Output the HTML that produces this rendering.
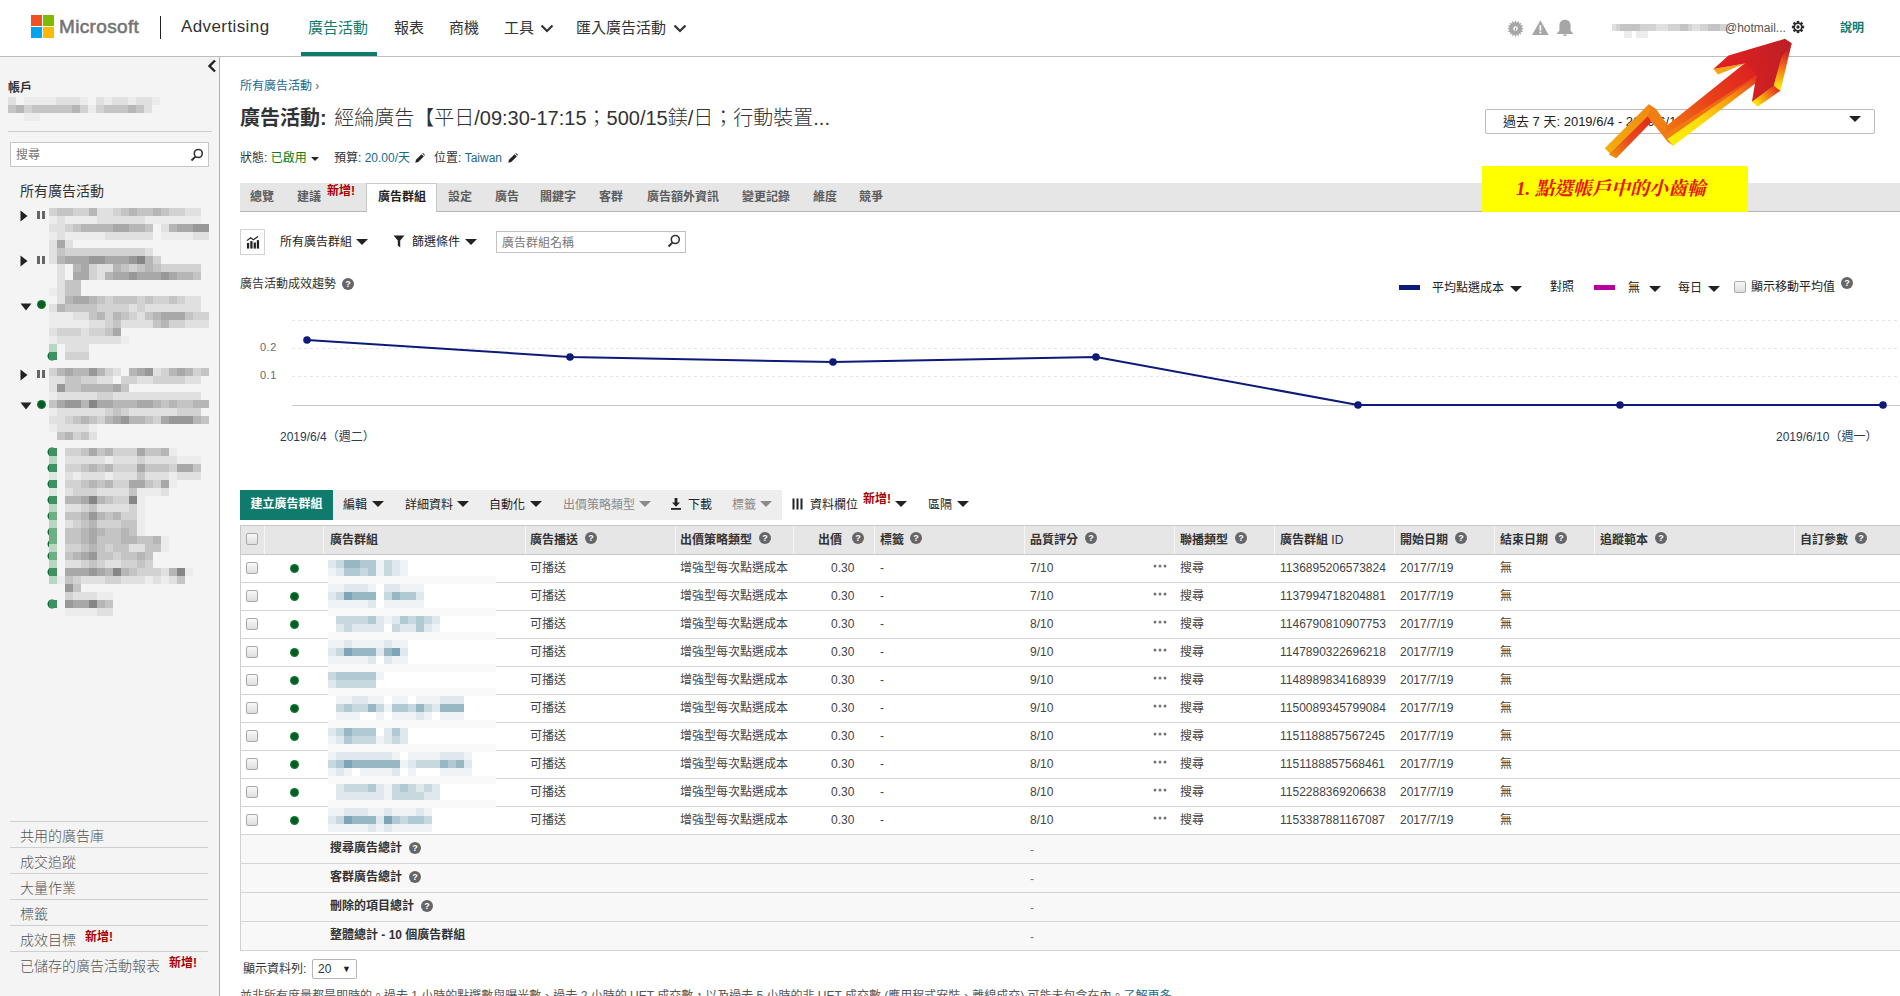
<!DOCTYPE html>
<html lang="zh-Hant"><head><meta charset="utf-8"><title>Microsoft Advertising</title>
<style>
*{box-sizing:border-box;margin:0;padding:0}
html,body{width:1900px;height:996px;overflow:hidden;background:#fff}
body{font-family:"Liberation Sans","Noto Sans CJK TC",sans-serif;font-size:12px;color:#333;position:relative}
.a{position:absolute;white-space:nowrap}
.b{font-weight:bold}
#hdr{position:absolute;left:0;top:0;width:1900px;height:57px;background:#fff;border-bottom:1px solid #bdbdbd}
#side{position:absolute;left:0;top:57px;width:220px;height:939px;background:#f4f4f4;border-right:1px solid #adadad}
.nav{font-size:15px;color:#333;top:17px;line-height:22px}
.teal{color:#0f7b6c}
.lnk{color:#1a6a8e}
.red{color:#a80000;font-weight:bold}
.tri{position:absolute;width:0;height:0;border-left:5px solid transparent;border-right:5px solid transparent;border-top:6px solid #222}
.sline{position:absolute;left:8px;width:204px;height:1px;background:#cfcfcf}
.sl{font-size:14px;color:#555;left:20px;line-height:18px;font-weight:300}
.q{position:absolute;width:12px;height:12px;border-radius:50%;background:#666;color:#fff;font-size:9px;font-weight:bold;line-height:12px;text-align:center;font-family:"Liberation Sans",sans-serif}
.tab{top:189px;font-weight:bold;color:#5c5c5c;line-height:16px}
.th{font-weight:bold;color:#333;top:532px;line-height:16px}
.td{line-height:16px;color:#444}
.row{position:absolute;left:240px;width:1660px;height:1px;background:#d4d4d4}
.cb{position:absolute;left:246px;width:12px;height:12px;border:1px solid #a9a9a9;border-radius:2px;background:linear-gradient(#f8f8f8,#dedede)}
.dot{position:absolute;width:9px;height:9px;border-radius:50%;background:radial-gradient(#075a22 40%,#17803a 70%)}
.mz{position:absolute}
</style></head>
<body>
<div id="hdr">
<div class="a" style="left:31px;top:15px;width:11px;height:11px;background:#f25022"></div>
<div class="a" style="left:43px;top:15px;width:11px;height:11px;background:#7fba00"></div>
<div class="a" style="left:31px;top:27px;width:11px;height:11px;background:#00a4ef"></div>
<div class="a" style="left:43px;top:27px;width:11px;height:11px;background:#ffb900"></div>
<div class="a" id="ms" style="left:59px;top:15px;font-size:19px;line-height:24px;color:#737373;font-weight:normal;-webkit-text-stroke:0.55px #737373;letter-spacing:0.35px;font-family:'Liberation Sans',sans-serif">Microsoft</div>
<div class="a" style="left:160px;top:16px;width:1px;height:23px;background:#222"></div>
<div class="a" id="adv" style="left:181px;top:15px;font-size:17px;line-height:24px;color:#333;letter-spacing:0.4px;font-family:'Liberation Sans',sans-serif">Advertising</div>
<div class="a nav teal" style="left:308px">廣告活動</div>
<div class="a" style="left:301px;top:52px;width:76px;height:4px;background:#0f7b6c"></div>
<div class="a nav" style="left:394px">報表</div>
<div class="a nav" style="left:449px">商機</div>
<div class="a nav" style="left:504px">工具</div>
<svg class="a" style="left:539.5px;top:24px" width="14" height="9" viewBox="0 0 14 9"><polyline points="1.5,1.5 7,7 12.5,1.5" fill="none" stroke="#333" stroke-width="2.2"/></svg>
<div class="a nav" style="left:576px">匯入廣告活動</div>
<svg class="a" style="left:672.5px;top:24px" width="14" height="9" viewBox="0 0 14 9"><polyline points="1.5,1.5 7,7 12.5,1.5" fill="none" stroke="#333" stroke-width="2.2"/></svg>
<svg class="a" style="left:1506px;top:19px" width="70" height="18" viewBox="0 0 70 18">
<g fill="#a6a6a6">
<polygon points="9.5,1.2 10.7,3.7 12.7,1.8 12.8,4.6 15.4,3.7 14.5,6.3 17.3,6.4 15.4,8.4 17.9,9.6 15.4,10.8 17.3,12.8 14.5,12.9 15.4,15.5 12.8,14.6 12.7,17.4 10.7,15.5 9.5,18.0 8.3,15.5 6.3,17.4 6.2,14.6 3.6,15.5 4.5,12.9 1.7,12.8 3.6,10.8 1.1,9.6 3.6,8.4 1.7,6.4 4.5,6.3 3.6,3.7 6.2,4.6 6.3,1.8 8.3,3.7"/>
<path d="M34.4 1.2 L42.7 16 L26.1 16 Z"/>
<path d="M59 0.8c-3.4 0-5.6 2.4-5.6 5.6v5.4l-2.4 2.4v0.8h16v-0.8l-2.4-2.4V6.4c0-3.200000000000001-2.2-5.6-5.6-5.6z"/>
<path d="M57 15.6h4a2 1.6 0 0 1-4 0z"/>
</g>
<circle cx="9.5" cy="9.6" r="2.3" fill="#fff"/><rect x="8.9" y="8.6" width="1.4" height="3" fill="#a6a6a6"/>
<rect x="33.5" y="6.2" width="1.8" height="5.4" fill="#fff"/><rect x="33.5" y="12.6" width="1.8" height="1.8" fill="#fff"/>
</svg>
<svg class="a" style="left:0;top:0" width="1900" height="56"><path fill="#e0e0e0" d="M1612 24h4v7h-4zM1656 24h4v7h-4zM1660 24h4v7h-4zM1664 24h4v7h-4zM1692 24h4v7h-4zM1696 24h4v7h-4z"/><path fill="#d2d2d2" d="M1616 24h4v7h-4zM1640 24h4v7h-4zM1644 24h4v7h-4zM1648 24h4v7h-4zM1652 24h4v7h-4zM1668 24h4v7h-4zM1672 24h4v7h-4zM1676 24h4v7h-4zM1688 24h4v7h-4zM1700 24h4v7h-4zM1704 24h4v7h-4zM1720 24h4v7h-4zM1724 24h4v7h-4z"/><path fill="#c4c4c4" d="M1620 24h4v7h-4zM1624 24h4v7h-4zM1628 24h4v7h-4zM1632 24h4v7h-4zM1636 24h4v7h-4zM1680 24h4v7h-4zM1684 24h4v7h-4zM1708 24h4v7h-4zM1712 24h4v7h-4zM1716 24h4v7h-4z"/><path fill="#ececec" d="M1624 31h4v7h-4zM1628 31h4v7h-4zM1636 31h4v7h-4zM1640 31h4v7h-4zM1644 31h4v7h-4z"/></svg>
<div class="a" style="left:1725px;top:20px;line-height:16px;color:#555;font-size:12px">@hotmail...</div>
<svg class="a" style="left:1791px;top:20px" width="14" height="14" viewBox="-8 -8 16 16">
<g fill="#2b2b2b"><circle r="5.2"/>
<g id="tt"><rect x="-1.5" y="-7" width="3" height="14"/></g>
<rect x="-1.5" y="-7" width="3" height="14" transform="rotate(45)"/>
<rect x="-1.5" y="-7" width="3" height="14" transform="rotate(90)"/>
<rect x="-1.5" y="-7" width="3" height="14" transform="rotate(135)"/></g>
<circle r="3.4" fill="#fff"/><circle r="1.9" fill="#2b2b2b"/><circle r="0.0" fill="#fff"/>
</svg>
<div class="a b teal" style="left:1840px;top:20px;line-height:16px">說明</div>
</div>
<div id="side"></div>
<svg class="a" style="left:206px;top:59px" width="12" height="14" viewBox="0 0 12 14"><polyline points="9,1.5 3.5,7 9,12.5" fill="none" stroke="#222" stroke-width="2.4"/></svg>
<div class="a b" style="left:8px;top:80px;line-height:16px;color:#333">帳戶</div>
<svg class="a" style="left:0;top:0" width="220" height="996"><path fill="#e0e0e0" d="M8 97h8v8h-8zM56 97h8v8h-8zM64 97h8v8h-8zM72 97h8v8h-8zM96 97h8v8h-8zM112 97h8v8h-8zM120 97h8v8h-8zM136 97h8v8h-8zM144 97h8v8h-8zM144 105h8v8h-8z"/><path fill="#ececec" d="M24 97h8v8h-8zM32 97h8v8h-8zM40 97h8v8h-8zM48 97h8v8h-8zM80 97h8v8h-8zM104 97h8v8h-8zM128 97h8v8h-8zM152 97h8v8h-8zM88 105h8v8h-8zM24 113h8v8h-8zM32 113h8v8h-8z"/><path fill="#c4c4c4" d="M8 105h8v8h-8zM32 105h8v8h-8zM40 105h8v8h-8zM48 105h8v8h-8zM56 105h8v8h-8zM64 105h8v8h-8zM104 105h8v8h-8zM112 105h8v8h-8zM120 105h8v8h-8zM136 105h8v8h-8z"/><path fill="#b6b6b6" d="M16 105h8v8h-8zM72 105h8v8h-8zM128 105h8v8h-8z"/><path fill="#d2d2d2" d="M24 105h8v8h-8zM80 105h8v8h-8zM96 105h8v8h-8z"/><circle cx="52" cy="356" r="4.5" fill="#0b6a2b"/><circle cx="52" cy="452" r="4.5" fill="#0b6a2b"/><circle cx="52" cy="468" r="4.5" fill="#0b6a2b"/><circle cx="52" cy="484" r="4.5" fill="#0b6a2b"/><circle cx="52" cy="500" r="4.5" fill="#0b6a2b"/><circle cx="52" cy="516" r="4.5" fill="#0b6a2b"/><circle cx="52" cy="532" r="4.5" fill="#0b6a2b"/><circle cx="52" cy="544.0" r="4.5" fill="#0b6a2b"/><circle cx="52" cy="556" r="4.5" fill="#0b6a2b"/><circle cx="52" cy="572" r="4.5" fill="#0b6a2b"/><circle cx="52" cy="604" r="4.5" fill="#0b6a2b"/><path fill="#d2d2d2" d="M49 208h8v8h-8zM73 208h8v8h-8zM81 208h8v8h-8zM113 208h8v8h-8zM169 208h8v8h-8zM177 208h8v8h-8zM65 224h8v8h-8zM65 248h8v8h-8zM73 248h8v8h-8zM81 248h8v8h-8zM89 248h8v8h-8zM97 248h8v8h-8zM105 248h8v8h-8zM113 248h8v8h-8zM121 248h8v8h-8zM129 248h8v8h-8zM137 248h8v8h-8zM153 256h8v8h-8zM89 264h8v8h-8zM129 264h8v8h-8zM161 264h8v8h-8zM169 264h8v8h-8zM177 264h8v8h-8zM185 264h8v8h-8zM193 264h8v8h-8zM89 272h8v8h-8zM105 296h8v8h-8zM137 296h8v8h-8zM153 296h8v8h-8zM161 296h8v8h-8zM177 296h8v8h-8zM97 304h8v8h-8zM105 304h8v8h-8zM113 304h8v8h-8zM121 304h8v8h-8zM137 304h8v8h-8zM105 312h8v8h-8zM129 312h8v8h-8zM193 312h8v8h-8zM201 312h8v8h-8zM105 320h8v8h-8zM169 320h8v8h-8zM177 320h8v8h-8zM57 328h8v8h-8zM65 328h8v8h-8zM73 328h8v8h-8zM89 328h8v8h-8zM97 328h8v8h-8zM65 352h8v8h-8zM73 352h8v8h-8zM81 352h8v8h-8zM49 368h8v8h-8zM105 368h8v8h-8zM161 368h8v8h-8zM193 368h8v8h-8zM81 376h8v8h-8zM89 376h8v8h-8zM121 376h8v8h-8zM129 376h8v8h-8zM153 376h8v8h-8zM161 376h8v8h-8zM169 376h8v8h-8zM177 376h8v8h-8zM97 392h8v8h-8zM105 392h8v8h-8zM105 408h8v8h-8zM121 408h8v8h-8zM177 408h8v8h-8zM185 408h8v8h-8zM193 408h8v8h-8zM65 416h8v8h-8zM97 416h8v8h-8zM153 416h8v8h-8zM73 432h8v8h-8zM65 448h8v8h-8zM73 448h8v8h-8zM113 448h8v8h-8zM121 448h8v8h-8zM129 448h8v8h-8zM137 456h8v8h-8zM65 464h8v8h-8zM73 464h8v8h-8zM113 464h8v8h-8zM121 464h8v8h-8zM129 464h8v8h-8zM169 464h8v8h-8zM65 480h8v8h-8zM73 480h8v8h-8zM113 480h8v8h-8zM121 480h8v8h-8zM153 480h8v8h-8zM73 488h8v8h-8zM81 488h8v8h-8zM89 488h8v8h-8zM113 496h8v8h-8zM121 496h8v8h-8zM81 504h8v8h-8zM129 504h8v8h-8zM121 512h8v8h-8zM129 512h8v8h-8zM73 520h8v8h-8zM97 520h8v8h-8zM105 520h8v8h-8zM113 520h8v8h-8zM65 544h8v8h-8zM73 544h8v8h-8zM105 544h8v8h-8zM113 552h8v8h-8zM81 560h8v8h-8zM97 560h8v8h-8zM121 560h8v8h-8zM129 560h8v8h-8zM145 560h8v8h-8zM137 568h8v8h-8zM145 568h8v8h-8zM153 568h8v8h-8zM73 576h8v8h-8zM105 576h8v8h-8zM113 576h8v8h-8zM65 592h8v8h-8z"/><path fill="#c4c4c4" d="M57 208h8v8h-8zM65 208h8v8h-8zM121 208h8v8h-8zM137 208h8v8h-8zM145 208h8v8h-8zM161 208h8v8h-8zM73 224h8v8h-8zM145 224h8v8h-8zM57 248h8v8h-8zM121 264h8v8h-8zM137 264h8v8h-8zM153 264h8v8h-8zM193 272h8v8h-8zM65 280h8v8h-8zM73 280h8v8h-8zM65 288h8v8h-8zM73 288h8v8h-8zM97 296h8v8h-8zM113 296h8v8h-8zM121 296h8v8h-8zM129 296h8v8h-8zM145 296h8v8h-8zM169 296h8v8h-8zM65 304h8v8h-8zM73 304h8v8h-8zM81 304h8v8h-8zM89 304h8v8h-8zM89 312h8v8h-8zM121 312h8v8h-8zM145 312h8v8h-8zM185 312h8v8h-8zM113 320h8v8h-8zM153 320h8v8h-8zM105 328h8v8h-8zM201 368h8v8h-8zM65 376h8v8h-8zM73 376h8v8h-8zM65 384h8v8h-8zM73 384h8v8h-8zM121 384h8v8h-8zM49 400h8v8h-8zM161 400h8v8h-8zM177 400h8v8h-8zM185 400h8v8h-8zM113 408h8v8h-8zM73 416h8v8h-8zM89 416h8v8h-8zM145 416h8v8h-8zM201 416h8v8h-8zM57 432h8v8h-8zM81 432h8v8h-8zM81 448h8v8h-8zM97 448h8v8h-8zM145 448h8v8h-8zM153 448h8v8h-8zM81 464h8v8h-8zM97 464h8v8h-8zM145 464h8v8h-8zM153 464h8v8h-8zM161 464h8v8h-8zM193 464h8v8h-8zM137 472h8v8h-8zM81 480h8v8h-8zM97 480h8v8h-8zM145 480h8v8h-8zM129 488h8v8h-8zM105 496h8v8h-8zM89 504h8v8h-8zM65 512h8v8h-8zM73 512h8v8h-8zM105 512h8v8h-8zM81 520h8v8h-8zM121 520h8v8h-8zM129 520h8v8h-8zM65 528h8v8h-8zM73 528h8v8h-8zM105 528h8v8h-8zM113 528h8v8h-8zM129 528h8v8h-8zM65 536h8v8h-8zM73 536h8v8h-8zM97 536h8v8h-8zM105 536h8v8h-8zM113 536h8v8h-8zM137 536h8v8h-8zM145 536h8v8h-8zM81 544h8v8h-8zM97 544h8v8h-8zM113 544h8v8h-8zM121 544h8v8h-8zM145 544h8v8h-8zM153 544h8v8h-8zM65 552h8v8h-8zM97 552h8v8h-8zM105 552h8v8h-8zM121 552h8v8h-8zM129 552h8v8h-8zM145 552h8v8h-8zM89 560h8v8h-8zM137 560h8v8h-8zM129 568h8v8h-8zM65 576h8v8h-8zM177 576h8v8h-8zM73 584h8v8h-8zM105 600h8v8h-8z"/><path fill="#b6b6b6" d="M89 208h8v8h-8zM129 208h8v8h-8zM153 208h8v8h-8zM81 224h8v8h-8zM89 224h8v8h-8zM97 224h8v8h-8zM105 224h8v8h-8zM129 224h8v8h-8zM137 224h8v8h-8zM169 224h8v8h-8zM57 256h8v8h-8zM145 256h8v8h-8zM73 264h8v8h-8zM113 264h8v8h-8zM145 264h8v8h-8zM105 272h8v8h-8zM177 272h8v8h-8zM185 272h8v8h-8zM65 296h8v8h-8zM89 296h8v8h-8zM57 304h8v8h-8zM97 312h8v8h-8zM113 312h8v8h-8zM153 312h8v8h-8zM161 320h8v8h-8zM57 368h8v8h-8zM73 368h8v8h-8zM81 368h8v8h-8zM97 368h8v8h-8zM129 368h8v8h-8zM169 368h8v8h-8zM185 368h8v8h-8zM81 384h8v8h-8zM89 384h8v8h-8zM97 384h8v8h-8zM105 384h8v8h-8zM81 400h8v8h-8zM113 400h8v8h-8zM121 400h8v8h-8zM129 400h8v8h-8zM153 400h8v8h-8zM169 400h8v8h-8zM193 400h8v8h-8zM201 400h8v8h-8zM81 416h8v8h-8zM105 416h8v8h-8zM129 416h8v8h-8zM137 416h8v8h-8zM193 416h8v8h-8zM65 432h8v8h-8zM105 448h8v8h-8zM161 448h8v8h-8zM89 464h8v8h-8zM105 464h8v8h-8zM89 480h8v8h-8zM105 480h8v8h-8zM65 496h8v8h-8zM73 496h8v8h-8zM97 496h8v8h-8zM81 512h8v8h-8zM97 512h8v8h-8zM113 512h8v8h-8zM89 520h8v8h-8zM81 528h8v8h-8zM97 528h8v8h-8zM121 528h8v8h-8zM81 536h8v8h-8zM121 536h8v8h-8zM129 536h8v8h-8zM153 536h8v8h-8zM89 544h8v8h-8zM73 552h8v8h-8zM137 552h8v8h-8zM105 568h8v8h-8zM121 568h8v8h-8zM169 568h8v8h-8zM97 600h8v8h-8z"/><path fill="#e0e0e0" d="M97 208h8v8h-8zM105 208h8v8h-8zM185 208h8v8h-8zM193 208h8v8h-8zM57 216h8v8h-8zM97 216h8v8h-8zM105 216h8v8h-8zM113 216h8v8h-8zM121 216h8v8h-8zM129 216h8v8h-8zM137 216h8v8h-8zM49 224h8v8h-8zM57 224h8v8h-8zM161 224h8v8h-8zM57 232h8v8h-8zM105 232h8v8h-8zM113 232h8v8h-8zM121 232h8v8h-8zM129 232h8v8h-8zM137 232h8v8h-8zM145 232h8v8h-8zM193 232h8v8h-8zM201 232h8v8h-8zM49 240h8v8h-8zM65 240h8v8h-8zM49 248h8v8h-8zM145 248h8v8h-8zM49 256h8v8h-8zM57 264h8v8h-8zM97 264h8v8h-8zM105 264h8v8h-8zM57 272h8v8h-8zM97 272h8v8h-8zM57 280h8v8h-8zM57 288h8v8h-8zM57 296h8v8h-8zM185 296h8v8h-8zM193 296h8v8h-8zM49 304h8v8h-8zM129 304h8v8h-8zM145 304h8v8h-8zM153 304h8v8h-8zM161 304h8v8h-8zM169 304h8v8h-8zM177 304h8v8h-8zM185 304h8v8h-8zM193 304h8v8h-8zM73 312h8v8h-8zM81 312h8v8h-8zM137 312h8v8h-8zM89 320h8v8h-8zM97 320h8v8h-8zM121 320h8v8h-8zM129 320h8v8h-8zM137 320h8v8h-8zM145 320h8v8h-8zM185 320h8v8h-8zM193 320h8v8h-8zM201 320h8v8h-8zM49 328h8v8h-8zM81 328h8v8h-8zM57 336h8v8h-8zM65 336h8v8h-8zM73 336h8v8h-8zM81 336h8v8h-8zM89 336h8v8h-8zM97 336h8v8h-8zM105 336h8v8h-8zM113 336h8v8h-8zM65 344h8v8h-8zM73 344h8v8h-8zM81 344h8v8h-8zM113 368h8v8h-8zM153 368h8v8h-8zM49 376h8v8h-8zM57 376h8v8h-8zM97 376h8v8h-8zM105 376h8v8h-8zM137 376h8v8h-8zM145 376h8v8h-8zM185 376h8v8h-8zM193 376h8v8h-8zM49 384h8v8h-8zM57 392h8v8h-8zM65 392h8v8h-8zM73 392h8v8h-8zM81 392h8v8h-8zM89 392h8v8h-8zM113 392h8v8h-8zM121 392h8v8h-8zM129 392h8v8h-8zM137 392h8v8h-8zM145 392h8v8h-8zM153 392h8v8h-8zM161 392h8v8h-8zM169 392h8v8h-8zM177 392h8v8h-8zM185 392h8v8h-8zM193 392h8v8h-8zM57 408h8v8h-8zM65 408h8v8h-8zM73 408h8v8h-8zM81 408h8v8h-8zM89 408h8v8h-8zM97 408h8v8h-8zM129 408h8v8h-8zM137 408h8v8h-8zM145 408h8v8h-8zM153 408h8v8h-8zM161 408h8v8h-8zM169 408h8v8h-8zM49 416h8v8h-8zM57 416h8v8h-8zM57 424h8v8h-8zM65 424h8v8h-8zM73 424h8v8h-8zM81 424h8v8h-8zM89 432h8v8h-8zM65 456h8v8h-8zM73 456h8v8h-8zM81 456h8v8h-8zM89 456h8v8h-8zM97 456h8v8h-8zM113 456h8v8h-8zM121 456h8v8h-8zM129 456h8v8h-8zM145 456h8v8h-8zM153 456h8v8h-8zM161 456h8v8h-8zM169 456h8v8h-8zM65 472h8v8h-8zM81 472h8v8h-8zM89 472h8v8h-8zM97 472h8v8h-8zM113 472h8v8h-8zM121 472h8v8h-8zM129 472h8v8h-8zM145 472h8v8h-8zM153 472h8v8h-8zM161 472h8v8h-8zM177 472h8v8h-8zM185 472h8v8h-8zM193 472h8v8h-8zM65 488h8v8h-8zM97 488h8v8h-8zM105 488h8v8h-8zM113 488h8v8h-8zM121 488h8v8h-8zM161 488h8v8h-8zM65 504h8v8h-8zM73 504h8v8h-8zM97 504h8v8h-8zM105 504h8v8h-8zM113 504h8v8h-8zM121 504h8v8h-8zM65 520h8v8h-8zM129 544h8v8h-8zM137 544h8v8h-8zM65 560h8v8h-8zM73 560h8v8h-8zM105 560h8v8h-8zM113 560h8v8h-8zM161 568h8v8h-8zM81 576h8v8h-8zM89 576h8v8h-8zM97 576h8v8h-8zM121 576h8v8h-8zM129 576h8v8h-8zM137 576h8v8h-8zM153 576h8v8h-8zM169 576h8v8h-8zM73 592h8v8h-8zM81 592h8v8h-8zM89 592h8v8h-8zM97 608h8v8h-8zM105 608h8v8h-8z"/><path fill="#ececec" d="M49 216h8v8h-8zM65 216h8v8h-8zM73 216h8v8h-8zM81 216h8v8h-8zM89 216h8v8h-8zM145 216h8v8h-8zM153 216h8v8h-8zM161 216h8v8h-8zM169 216h8v8h-8zM177 216h8v8h-8zM185 216h8v8h-8zM193 216h8v8h-8zM49 232h8v8h-8zM65 232h8v8h-8zM73 232h8v8h-8zM81 232h8v8h-8zM89 232h8v8h-8zM97 232h8v8h-8zM161 232h8v8h-8zM169 232h8v8h-8zM177 232h8v8h-8zM185 232h8v8h-8zM49 288h8v8h-8zM49 312h8v8h-8zM57 312h8v8h-8zM65 312h8v8h-8zM49 320h8v8h-8zM57 320h8v8h-8zM65 320h8v8h-8zM73 320h8v8h-8zM81 320h8v8h-8zM49 336h8v8h-8zM121 336h8v8h-8zM49 392h8v8h-8zM49 408h8v8h-8zM49 424h8v8h-8zM89 424h8v8h-8zM169 448h8v8h-8zM105 456h8v8h-8zM177 456h8v8h-8zM185 456h8v8h-8zM193 456h8v8h-8zM73 472h8v8h-8zM105 472h8v8h-8zM169 472h8v8h-8zM169 480h8v8h-8zM137 488h8v8h-8zM145 488h8v8h-8zM153 488h8v8h-8zM137 496h8v8h-8zM137 504h8v8h-8zM137 512h8v8h-8zM137 520h8v8h-8zM137 528h8v8h-8zM161 536h8v8h-8zM161 544h8v8h-8zM185 568h8v8h-8zM57 576h8v8h-8zM145 576h8v8h-8zM161 576h8v8h-8zM97 592h8v8h-8zM105 592h8v8h-8zM65 608h8v8h-8zM73 608h8v8h-8zM81 608h8v8h-8zM89 608h8v8h-8z"/><path fill="#a8a8a8" d="M113 224h8v8h-8zM121 224h8v8h-8zM177 224h8v8h-8zM185 224h8v8h-8zM57 240h8v8h-8zM65 256h8v8h-8zM73 256h8v8h-8zM81 256h8v8h-8zM105 256h8v8h-8zM113 256h8v8h-8zM121 256h8v8h-8zM81 264h8v8h-8zM73 272h8v8h-8zM81 272h8v8h-8zM113 272h8v8h-8zM121 272h8v8h-8zM137 272h8v8h-8zM145 272h8v8h-8zM153 272h8v8h-8zM169 272h8v8h-8zM73 296h8v8h-8zM81 296h8v8h-8zM161 312h8v8h-8zM169 312h8v8h-8zM177 312h8v8h-8zM113 328h8v8h-8zM65 368h8v8h-8zM137 368h8v8h-8zM177 368h8v8h-8zM113 384h8v8h-8zM57 400h8v8h-8zM97 400h8v8h-8zM105 400h8v8h-8zM137 400h8v8h-8zM145 400h8v8h-8zM113 416h8v8h-8zM161 416h8v8h-8zM89 448h8v8h-8zM137 448h8v8h-8zM137 464h8v8h-8zM177 464h8v8h-8zM185 464h8v8h-8zM129 480h8v8h-8zM137 480h8v8h-8zM161 480h8v8h-8zM81 496h8v8h-8zM89 528h8v8h-8zM89 536h8v8h-8zM81 552h8v8h-8zM65 568h8v8h-8zM73 568h8v8h-8zM81 568h8v8h-8zM97 568h8v8h-8zM73 600h8v8h-8zM81 600h8v8h-8z"/><path fill="#989898" d="M193 224h8v8h-8zM201 224h8v8h-8zM89 256h8v8h-8zM97 256h8v8h-8zM129 256h8v8h-8zM129 272h8v8h-8zM161 272h8v8h-8zM89 368h8v8h-8zM145 368h8v8h-8zM57 384h8v8h-8zM65 400h8v8h-8zM73 400h8v8h-8zM121 416h8v8h-8zM169 416h8v8h-8zM177 416h8v8h-8zM185 416h8v8h-8zM89 512h8v8h-8zM89 552h8v8h-8zM89 568h8v8h-8zM65 584h8v8h-8zM65 600h8v8h-8z"/><path fill="#868686" d="M137 256h8v8h-8zM89 400h8v8h-8zM89 496h8v8h-8zM129 496h8v8h-8zM113 568h8v8h-8zM177 568h8v8h-8zM89 600h8v8h-8z"/><path fill="#b9d6c3" d="M49 344h8v8h-8zM49 456h8v8h-8zM49 504h8v8h-8zM49 520h8v8h-8zM49 544h8v8h-8zM49 560h8v8h-8zM49 576h8v8h-8z"/><path fill="#3f9163" d="M49 352h8v8h-8zM49 448h8v8h-8zM49 464h8v8h-8zM49 480h8v8h-8zM49 496h8v8h-8zM49 568h8v8h-8zM49 600h8v8h-8z"/><path fill="#dbe8df" d="M49 472h8v8h-8zM49 488h8v8h-8z"/><path fill="#6fae87" d="M49 512h8v8h-8zM49 528h8v8h-8zM49 536h8v8h-8zM49 552h8v8h-8z"/></svg>
<div class="sline" style="top:131px"></div>
<div class="a" style="left:10px;top:142px;width:199px;height:25px;background:#fff;border:1px solid #c6c6c6"></div>
<div class="a" style="left:16px;top:147px;line-height:16px;color:#777">搜尋</div>
<svg class="a" style="left:190px;top:148px" width="14" height="14" viewBox="0 0 14 14"><circle cx="8.3" cy="5.5" r="4" fill="none" stroke="#333" stroke-width="1.6"/><line x1="5.4" y1="8.6" x2="1.5" y2="12.5" stroke="#333" stroke-width="2"/></svg>
<div class="a" style="left:20px;top:181px;font-size:14px;line-height:20px;color:#333">所有廣告活動</div>
<svg class="a" style="left:20px;top:210px" width="8" height="12" viewBox="0 0 8 12"><path d="M0.5 0.5L7.5 6L0.5 11.5z" fill="#222"/></svg><div class="a" style="left:37px;top:211px;width:3px;height:8px;background:#666"></div><div class="a" style="left:42px;top:211px;width:3px;height:8px;background:#666"></div>
<svg class="a" style="left:20px;top:255px" width="8" height="12" viewBox="0 0 8 12"><path d="M0.5 0.5L7.5 6L0.5 11.5z" fill="#222"/></svg><div class="a" style="left:37px;top:256px;width:3px;height:8px;background:#666"></div><div class="a" style="left:42px;top:256px;width:3px;height:8px;background:#666"></div>
<svg class="a" style="left:20px;top:303px" width="12" height="8" viewBox="0 0 12 8"><path d="M0.5 0.5L11.5 0.5L6 7.5z" fill="#222"/></svg><div class="dot" style="left:37px;top:300px"></div>
<svg class="a" style="left:20px;top:369px" width="8" height="12" viewBox="0 0 8 12"><path d="M0.5 0.5L7.5 6L0.5 11.5z" fill="#222"/></svg><div class="a" style="left:37px;top:370px;width:3px;height:8px;background:#666"></div><div class="a" style="left:42px;top:370px;width:3px;height:8px;background:#666"></div>
<svg class="a" style="left:20px;top:402px" width="12" height="8" viewBox="0 0 12 8"><path d="M0.5 0.5L11.5 0.5L6 7.5z" fill="#222"/></svg><div class="dot" style="left:37px;top:400px"></div>
<div class="sline" style="top:821px;left:10px;width:198px"></div>
<div class="a sl" id="sl0" style="top:827px">共用的廣告庫</div>
<div class="sline" style="top:847px;left:10px;width:198px"></div>
<div class="a sl" id="sl1" style="top:853px">成交追蹤</div>
<div class="sline" style="top:873px;left:10px;width:198px"></div>
<div class="a sl" id="sl2" style="top:879px">大量作業</div>
<div class="sline" style="top:899px;left:10px;width:198px"></div>
<div class="a sl" id="sl3" style="top:905px">標籤</div>
<div class="sline" style="top:925px;left:10px;width:198px"></div>
<div class="a sl" id="sl4" style="top:931px">成效目標</div>
<div class="a red" style="left:85px;top:930px;line-height:14px;font-size:12px">新增!</div>
<div class="sline" style="top:951px;left:10px;width:198px"></div>
<div class="a sl" id="sl5" style="top:957px">已儲存的廣告活動報表</div>
<div class="a red" style="left:169px;top:956px;line-height:14px;font-size:12px">新增!</div>
<div class="a lnk" style="left:240px;top:78px;line-height:16px">所有廣告活動 <span style="color:#666">›</span></div>
<div class="a" id="ttl" style="left:240px;top:103px;font-size:20px;line-height:30px;color:#333"><span style="font-weight:bold;letter-spacing:0px">廣告活動:</span> <span style="font-weight:300;margin-left:2px">經綸廣告【平日/09:30-17:15；500/15鎂/日；行動裝置...</span></div>
<div class="a" style="left:240px;top:150px;line-height:16px">狀態: <span style="color:#107c10">已啟用</span></div>
<div class="tri" style="left:311px;top:157px;border-left-width:4px;border-right-width:4px;border-top-width:4px;border-top-color:#222"></div>
<div class="a" style="left:334px;top:150px;line-height:16px">預算: <span class="lnk">20.00/天</span></div>
<svg class="a" style="left:415px;top:153px" width="10" height="10" viewBox="0 0 10 10"><path d="M0.3 9.7L1 6.8L6.6 1.2L8.8 3.4L3.2 9z" fill="#222"/><path d="M7.3 0.6L8 0 L10 2L9.4 2.7z" fill="#222"/></svg>
<div class="a" style="left:434px;top:150px;line-height:16px">位置: <span class="lnk">Taiwan</span></div>
<svg class="a" style="left:508px;top:153px" width="10" height="10" viewBox="0 0 10 10"><path d="M0.3 9.7L1 6.8L6.6 1.2L8.8 3.4L3.2 9z" fill="#222"/><path d="M7.3 0.6L8 0 L10 2L9.4 2.7z" fill="#222"/></svg>
<div class="a" style="left:1485px;top:109px;width:390px;height:25px;background:#fff;border:1px solid #bbb;border-radius:2px"></div>
<div class="a" style="left:1503px;top:113px;line-height:18px;font-size:13px;color:#222">過去 7 天: 2019/6/4 - 2019/6/10</div>
<div class="tri" style="left:1849px;top:116px;border-left-width:6px;border-right-width:6px;border-top-width:6px;border-top-color:#222"></div>
<div class="a" style="left:240px;top:183px;width:1660px;height:29px;background:#e6e6e6;border-bottom:1px solid #b5b5b5"></div>
<div class="a" style="left:366px;top:183px;width:71px;height:29px;background:#fff;border:1px solid #c8c8c8;border-bottom:none"></div>
<div class="a tab" style="left:250px;">總覽</div>
<div class="a tab" style="left:297px;">建議</div>
<div class="a tab" style="left:378px;color:#222">廣告群組</div>
<div class="a tab" style="left:448px;">設定</div>
<div class="a tab" style="left:495px;">廣告</div>
<div class="a tab" style="left:540px;">關鍵字</div>
<div class="a tab" style="left:599px;">客群</div>
<div class="a tab" style="left:647px;">廣告額外資訊</div>
<div class="a tab" style="left:742px;">變更記錄</div>
<div class="a tab" style="left:813px;">維度</div>
<div class="a tab" style="left:859px;">競爭</div>
<div class="a red" style="left:327px;top:184px;line-height:14px;font-size:12px">新增!</div>
<div class="a" style="left:240px;top:229px;width:25px;height:26px;background:#fff;border:1px solid #d2d2d2"></div>
<svg class="a" style="left:246px;top:235px" width="14" height="15" viewBox="0 0 15 15"><g fill="#222"><rect x="1" y="8" width="2.4" height="6"/><rect x="4.6" y="6" width="2.4" height="8"/><rect x="8.2" y="7.5" width="2.4" height="6.5"/><rect x="11.6" y="5" width="2.4" height="9"/></g><polyline points="1,5.5 5,2.5 8,4.5 13,1" fill="none" stroke="#222" stroke-width="1.3"/></svg>
<div class="a" style="left:280px;top:234px;line-height:16px;color:#222">所有廣告群組</div>
<div class="tri" style="left:356px;top:239px;border-left-width:6px;border-right-width:6px;border-top-width:6px;border-top-color:#222"></div>
<svg class="a" style="left:393px;top:235px" width="12" height="13" viewBox="0 0 12 13"><path d="M0.5 0.5h11L7.2 5.5V12.5L4.8 10.5V5.5z" fill="#222"/></svg>
<div class="a" style="left:412px;top:234px;line-height:16px;color:#222">篩選條件</div>
<div class="tri" style="left:465px;top:239px;border-left-width:6px;border-right-width:6px;border-top-width:6px;border-top-color:#222"></div>
<div class="a" style="left:496px;top:231px;width:190px;height:22px;background:#fff;border:1px solid #c2c2c2"></div>
<div class="a" style="left:502px;top:235px;line-height:16px;color:#777">廣告群組名稱</div>
<svg class="a" style="left:667px;top:234px" width="14" height="14" viewBox="0 0 14 14"><circle cx="8.3" cy="5.5" r="4" fill="none" stroke="#333" stroke-width="1.6"/><line x1="5.4" y1="8.6" x2="1.5" y2="12.5" stroke="#333" stroke-width="2"/></svg>
<div class="a" style="left:240px;top:276px;line-height:16px;color:#333">廣告活動成效趨勢</div>
<div class="q" style="left:342px;top:278px;background:#666">?</div>
<div class="a" style="left:1399px;top:285px;width:21px;height:5px;background:#0c1a7a"></div>
<div class="a" style="left:1432px;top:280px;line-height:16px;color:#222">平均點選成本</div>
<div class="tri" style="left:1510px;top:286px;border-left-width:6px;border-right-width:6px;border-top-width:6px;border-top-color:#222"></div>
<div class="a" style="left:1550px;top:279px;line-height:16px;color:#222">對照</div>
<div class="a" style="left:1594px;top:285px;width:21px;height:5px;background:#b4009e"></div>
<div class="a" style="left:1628px;top:280px;line-height:16px;color:#222">無</div>
<div class="tri" style="left:1649px;top:286px;border-left-width:6px;border-right-width:6px;border-top-width:6px;border-top-color:#222"></div>
<div class="a" style="left:1678px;top:280px;line-height:16px;color:#222">每日</div>
<div class="tri" style="left:1708px;top:286px;border-left-width:6px;border-right-width:6px;border-top-width:6px;border-top-color:#222"></div>
<div class="a" style="left:1734px;top:281px;width:12px;height:12px;border:1px solid #aaa;border-radius:2px;background:linear-gradient(#f8f8f8,#dedede)"></div>
<div class="a" style="left:1751px;top:279px;line-height:16px;color:#222">顯示移動平均值</div>
<div class="q" style="left:1841px;top:277px;background:#666">?</div>
<svg class="a" style="left:0;top:0" width="1900" height="996"><line x1="292" y1="320.5" x2="1900" y2="320.5" stroke="#e6e6e6" stroke-width="1" stroke-dasharray="3,3"/><line x1="292" y1="348.5" x2="1900" y2="348.5" stroke="#e6e6e6" stroke-width="1" stroke-dasharray="3,3"/><line x1="292" y1="376.5" x2="1900" y2="376.5" stroke="#e6e6e6" stroke-width="1" stroke-dasharray="3,3"/><line x1="292" y1="405.5" x2="1900" y2="405.5" stroke="#c8c8c8" stroke-width="1"/><polyline fill="none" stroke="#0c1a7a" stroke-width="2" points="307,340 570,357 833,362 1096,357 1358,405 1620,405 1883,405"/><circle cx="307" cy="340" r="3.8" fill="#0c1a7a"/><circle cx="570" cy="357" r="3.8" fill="#0c1a7a"/><circle cx="833" cy="362" r="3.8" fill="#0c1a7a"/><circle cx="1096" cy="357" r="3.8" fill="#0c1a7a"/><circle cx="1358" cy="405" r="3.8" fill="#0c1a7a"/><circle cx="1620" cy="405" r="3.8" fill="#0c1a7a"/><circle cx="1883" cy="405" r="3.8" fill="#0c1a7a"/><text x="260" y="351" font-size="11" fill="#666" font-family="Liberation Sans, sans-serif" letter-spacing="0.5">0.2</text><text x="260" y="379" font-size="11" fill="#666" font-family="Liberation Sans, sans-serif" letter-spacing="0.5">0.1</text></svg>
<div class="a" style="left:280px;top:429px;line-height:16px;color:#2b3a55;font-size:12px">2019/6/4（週二）</div>
<div class="a" style="left:1776px;top:429px;line-height:16px;color:#2b3a55;font-size:12px">2019/6/10（週一）</div>
<div class="a" style="left:333px;top:490px;width:449px;height:30px;background:#eeeeee"></div>
<div class="a b" style="left:240px;top:490px;width:93px;height:30px;background:#0f7b6c;color:#fff;line-height:29px;text-align:center;font-size:12px">建立廣告群組</div>
<div class="a" style="left:343px;top:497px;line-height:16px;color:#222">編輯</div>
<div class="tri" style="left:372px;top:501px;border-left-width:6px;border-right-width:6px;border-top-width:6px;border-top-color:#222"></div>
<div class="a" style="left:405px;top:497px;line-height:16px;color:#222">詳細資料</div>
<div class="tri" style="left:457px;top:501px;border-left-width:6px;border-right-width:6px;border-top-width:6px;border-top-color:#222"></div>
<div class="a" style="left:489px;top:497px;line-height:16px;color:#222">自動化</div>
<div class="tri" style="left:530px;top:501px;border-left-width:6px;border-right-width:6px;border-top-width:6px;border-top-color:#222"></div>
<div class="a" style="left:563px;top:497px;line-height:16px;color:#8a8a8a">出價策略類型</div>
<div class="tri" style="left:639px;top:501px;border-left-width:6px;border-right-width:6px;border-top-width:6px;border-top-color:#8a8a8a"></div>
<div class="a" style="left:688px;top:497px;line-height:16px;color:#222">下載</div>
<div class="a" style="left:732px;top:497px;line-height:16px;color:#8a8a8a">標籤</div>
<div class="tri" style="left:760px;top:501px;border-left-width:6px;border-right-width:6px;border-top-width:6px;border-top-color:#8a8a8a"></div>
<div class="a" style="left:810px;top:497px;line-height:16px;color:#222">資料欄位</div>
<div class="tri" style="left:895px;top:501px;border-left-width:6px;border-right-width:6px;border-top-width:6px;border-top-color:#222"></div>
<div class="a" style="left:928px;top:497px;line-height:16px;color:#222">區隔</div>
<div class="tri" style="left:957px;top:501px;border-left-width:6px;border-right-width:6px;border-top-width:6px;border-top-color:#222"></div>
<svg class="a" style="left:670px;top:498px" width="12" height="12" viewBox="0 0 12 12"><path d="M4.6 0h2.8v4.5h2.6L6 8.8 2 4.500000000000001h2.6z" fill="#222"/><rect x="1" y="10" width="10" height="1.8" fill="#222"/></svg>
<svg class="a" style="left:792px;top:498px" width="12" height="12" viewBox="0 0 12 12"><g fill="#222"><rect x="0.5" y="0.5" width="2" height="11"/><rect x="4.5" y="0.5" width="2" height="11"/><rect x="8.5" y="0.5" width="2" height="11"/></g></svg>
<div class="a red" style="left:863px;top:492px;line-height:14px;font-size:12px">新增!</div>
<div class="a" style="left:240px;top:525px;width:1660px;height:30px;background:#e6e6e6;border-top:1px solid #c8c8c8;border-bottom:1px solid #c8c8c8;border-left:1px solid #c8c8c8"></div>
<div class="a" style="left:264px;top:526px;width:1px;height:28px;background:#f6f6f6"></div>
<div class="a" style="left:323px;top:526px;width:1px;height:28px;background:#f6f6f6"></div>
<div class="a" style="left:525px;top:526px;width:1px;height:28px;background:#f6f6f6"></div>
<div class="a" style="left:675px;top:526px;width:1px;height:28px;background:#f6f6f6"></div>
<div class="a" style="left:793px;top:526px;width:1px;height:28px;background:#f6f6f6"></div>
<div class="a" style="left:874px;top:526px;width:1px;height:28px;background:#f6f6f6"></div>
<div class="a" style="left:1024px;top:526px;width:1px;height:28px;background:#f6f6f6"></div>
<div class="a" style="left:1174px;top:526px;width:1px;height:28px;background:#f6f6f6"></div>
<div class="a" style="left:1274px;top:526px;width:1px;height:28px;background:#f6f6f6"></div>
<div class="a" style="left:1394px;top:526px;width:1px;height:28px;background:#f6f6f6"></div>
<div class="a" style="left:1494px;top:526px;width:1px;height:28px;background:#f6f6f6"></div>
<div class="a" style="left:1594px;top:526px;width:1px;height:28px;background:#f6f6f6"></div>
<div class="a" style="left:1794px;top:526px;width:1px;height:28px;background:#f6f6f6"></div>
<div class="cb" style="top:533px"></div>
<div class="a th" style="left:330px">廣告群組</div>
<div class="a th" style="left:530px">廣告播送</div>
<div class="q" style="left:585px;top:532px;background:#666">?</div>
<div class="a th" style="left:680px">出價策略類型</div>
<div class="q" style="left:759px;top:532px;background:#666">?</div>
<div class="a th" style="left:818px">出價</div>
<div class="q" style="left:852px;top:532px;background:#666">?</div>
<div class="a th" style="left:880px">標籤</div>
<div class="q" style="left:910px;top:532px;background:#666">?</div>
<div class="a th" style="left:1030px">品質評分</div>
<div class="q" style="left:1085px;top:532px;background:#666">?</div>
<div class="a th" style="left:1180px">聯播類型</div>
<div class="q" style="left:1235px;top:532px;background:#666">?</div>
<div class="a th" style="left:1280px">廣告群組 <span style="font-weight:normal">ID</span></div>
<div class="a th" style="left:1400px">開始日期</div>
<div class="q" style="left:1455px;top:532px;background:#666">?</div>
<div class="a th" style="left:1500px">結束日期</div>
<div class="q" style="left:1555px;top:532px;background:#666">?</div>
<div class="a th" style="left:1600px">追蹤範本</div>
<div class="q" style="left:1655px;top:532px;background:#666">?</div>
<div class="a th" style="left:1800px">自訂參數</div>
<div class="q" style="left:1855px;top:532px;background:#666">?</div>
<div class="a" style="left:240px;top:835px;width:1660px;height:115px;background:#f8f8f8"></div>
<div class="a" style="left:240px;top:554px;width:1px;height:396px;background:#d0d0d0"></div>
<div class="row" style="top:582px"></div>
<div class="cb" style="top:562px"></div>
<div class="dot" style="left:290px;top:564px;width:9px;height:9px"></div>
<div class="a td" style="left:530px;top:560px">可播送</div>
<div class="a td" style="left:680px;top:560px">增強型每次點選成本</div>
<div class="a td" style="left:831px;top:560px">0.30</div>
<div class="a td" style="left:880px;top:560px">-</div>
<div class="a td" style="left:1030px;top:560px">7/10</div>
<svg class="a" style="left:1153px;top:564px" width="14" height="4" viewBox="0 0 14 4"><g fill="#777"><circle cx="2" cy="2" r="1.5"/><circle cx="7" cy="2" r="1.5"/><circle cx="12" cy="2" r="1.5"/></g></svg>
<div class="a td" style="left:1180px;top:560px">搜尋</div>
<div class="a td" style="left:1280px;top:560px">1136895206573824</div>
<div class="a td" style="left:1400px;top:560px">2017/7/19</div>
<div class="a td" style="left:1500px;top:560px">無</div>
<div class="row" style="top:610px"></div>
<div class="cb" style="top:590px"></div>
<div class="dot" style="left:290px;top:592px;width:9px;height:9px"></div>
<div class="a td" style="left:530px;top:588px">可播送</div>
<div class="a td" style="left:680px;top:588px">增強型每次點選成本</div>
<div class="a td" style="left:831px;top:588px">0.30</div>
<div class="a td" style="left:880px;top:588px">-</div>
<div class="a td" style="left:1030px;top:588px">7/10</div>
<svg class="a" style="left:1153px;top:592px" width="14" height="4" viewBox="0 0 14 4"><g fill="#777"><circle cx="2" cy="2" r="1.5"/><circle cx="7" cy="2" r="1.5"/><circle cx="12" cy="2" r="1.5"/></g></svg>
<div class="a td" style="left:1180px;top:588px">搜尋</div>
<div class="a td" style="left:1280px;top:588px">1137994718204881</div>
<div class="a td" style="left:1400px;top:588px">2017/7/19</div>
<div class="a td" style="left:1500px;top:588px">無</div>
<div class="row" style="top:638px"></div>
<div class="cb" style="top:618px"></div>
<div class="dot" style="left:290px;top:620px;width:9px;height:9px"></div>
<div class="a td" style="left:530px;top:616px">可播送</div>
<div class="a td" style="left:680px;top:616px">增強型每次點選成本</div>
<div class="a td" style="left:831px;top:616px">0.30</div>
<div class="a td" style="left:880px;top:616px">-</div>
<div class="a td" style="left:1030px;top:616px">8/10</div>
<svg class="a" style="left:1153px;top:620px" width="14" height="4" viewBox="0 0 14 4"><g fill="#777"><circle cx="2" cy="2" r="1.5"/><circle cx="7" cy="2" r="1.5"/><circle cx="12" cy="2" r="1.5"/></g></svg>
<div class="a td" style="left:1180px;top:616px">搜尋</div>
<div class="a td" style="left:1280px;top:616px">1146790810907753</div>
<div class="a td" style="left:1400px;top:616px">2017/7/19</div>
<div class="a td" style="left:1500px;top:616px">無</div>
<div class="row" style="top:666px"></div>
<div class="cb" style="top:646px"></div>
<div class="dot" style="left:290px;top:648px;width:9px;height:9px"></div>
<div class="a td" style="left:530px;top:644px">可播送</div>
<div class="a td" style="left:680px;top:644px">增強型每次點選成本</div>
<div class="a td" style="left:831px;top:644px">0.30</div>
<div class="a td" style="left:880px;top:644px">-</div>
<div class="a td" style="left:1030px;top:644px">9/10</div>
<svg class="a" style="left:1153px;top:648px" width="14" height="4" viewBox="0 0 14 4"><g fill="#777"><circle cx="2" cy="2" r="1.5"/><circle cx="7" cy="2" r="1.5"/><circle cx="12" cy="2" r="1.5"/></g></svg>
<div class="a td" style="left:1180px;top:644px">搜尋</div>
<div class="a td" style="left:1280px;top:644px">1147890322696218</div>
<div class="a td" style="left:1400px;top:644px">2017/7/19</div>
<div class="a td" style="left:1500px;top:644px">無</div>
<div class="row" style="top:694px"></div>
<div class="cb" style="top:674px"></div>
<div class="dot" style="left:290px;top:676px;width:9px;height:9px"></div>
<div class="a td" style="left:530px;top:672px">可播送</div>
<div class="a td" style="left:680px;top:672px">增強型每次點選成本</div>
<div class="a td" style="left:831px;top:672px">0.30</div>
<div class="a td" style="left:880px;top:672px">-</div>
<div class="a td" style="left:1030px;top:672px">9/10</div>
<svg class="a" style="left:1153px;top:676px" width="14" height="4" viewBox="0 0 14 4"><g fill="#777"><circle cx="2" cy="2" r="1.5"/><circle cx="7" cy="2" r="1.5"/><circle cx="12" cy="2" r="1.5"/></g></svg>
<div class="a td" style="left:1180px;top:672px">搜尋</div>
<div class="a td" style="left:1280px;top:672px">1148989834168939</div>
<div class="a td" style="left:1400px;top:672px">2017/7/19</div>
<div class="a td" style="left:1500px;top:672px">無</div>
<div class="row" style="top:722px"></div>
<div class="cb" style="top:702px"></div>
<div class="dot" style="left:290px;top:704px;width:9px;height:9px"></div>
<div class="a td" style="left:530px;top:700px">可播送</div>
<div class="a td" style="left:680px;top:700px">增強型每次點選成本</div>
<div class="a td" style="left:831px;top:700px">0.30</div>
<div class="a td" style="left:880px;top:700px">-</div>
<div class="a td" style="left:1030px;top:700px">9/10</div>
<svg class="a" style="left:1153px;top:704px" width="14" height="4" viewBox="0 0 14 4"><g fill="#777"><circle cx="2" cy="2" r="1.5"/><circle cx="7" cy="2" r="1.5"/><circle cx="12" cy="2" r="1.5"/></g></svg>
<div class="a td" style="left:1180px;top:700px">搜尋</div>
<div class="a td" style="left:1280px;top:700px">1150089345799084</div>
<div class="a td" style="left:1400px;top:700px">2017/7/19</div>
<div class="a td" style="left:1500px;top:700px">無</div>
<div class="row" style="top:750px"></div>
<div class="cb" style="top:730px"></div>
<div class="dot" style="left:290px;top:732px;width:9px;height:9px"></div>
<div class="a td" style="left:530px;top:728px">可播送</div>
<div class="a td" style="left:680px;top:728px">增強型每次點選成本</div>
<div class="a td" style="left:831px;top:728px">0.30</div>
<div class="a td" style="left:880px;top:728px">-</div>
<div class="a td" style="left:1030px;top:728px">8/10</div>
<svg class="a" style="left:1153px;top:732px" width="14" height="4" viewBox="0 0 14 4"><g fill="#777"><circle cx="2" cy="2" r="1.5"/><circle cx="7" cy="2" r="1.5"/><circle cx="12" cy="2" r="1.5"/></g></svg>
<div class="a td" style="left:1180px;top:728px">搜尋</div>
<div class="a td" style="left:1280px;top:728px">1151188857567245</div>
<div class="a td" style="left:1400px;top:728px">2017/7/19</div>
<div class="a td" style="left:1500px;top:728px">無</div>
<div class="row" style="top:778px"></div>
<div class="cb" style="top:758px"></div>
<div class="dot" style="left:290px;top:760px;width:9px;height:9px"></div>
<div class="a td" style="left:530px;top:756px">可播送</div>
<div class="a td" style="left:680px;top:756px">增強型每次點選成本</div>
<div class="a td" style="left:831px;top:756px">0.30</div>
<div class="a td" style="left:880px;top:756px">-</div>
<div class="a td" style="left:1030px;top:756px">8/10</div>
<svg class="a" style="left:1153px;top:760px" width="14" height="4" viewBox="0 0 14 4"><g fill="#777"><circle cx="2" cy="2" r="1.5"/><circle cx="7" cy="2" r="1.5"/><circle cx="12" cy="2" r="1.5"/></g></svg>
<div class="a td" style="left:1180px;top:756px">搜尋</div>
<div class="a td" style="left:1280px;top:756px">1151188857568461</div>
<div class="a td" style="left:1400px;top:756px">2017/7/19</div>
<div class="a td" style="left:1500px;top:756px">無</div>
<div class="row" style="top:806px"></div>
<div class="cb" style="top:786px"></div>
<div class="dot" style="left:290px;top:788px;width:9px;height:9px"></div>
<div class="a td" style="left:530px;top:784px">可播送</div>
<div class="a td" style="left:680px;top:784px">增強型每次點選成本</div>
<div class="a td" style="left:831px;top:784px">0.30</div>
<div class="a td" style="left:880px;top:784px">-</div>
<div class="a td" style="left:1030px;top:784px">8/10</div>
<svg class="a" style="left:1153px;top:788px" width="14" height="4" viewBox="0 0 14 4"><g fill="#777"><circle cx="2" cy="2" r="1.5"/><circle cx="7" cy="2" r="1.5"/><circle cx="12" cy="2" r="1.5"/></g></svg>
<div class="a td" style="left:1180px;top:784px">搜尋</div>
<div class="a td" style="left:1280px;top:784px">1152288369206638</div>
<div class="a td" style="left:1400px;top:784px">2017/7/19</div>
<div class="a td" style="left:1500px;top:784px">無</div>
<div class="row" style="top:834px"></div>
<div class="cb" style="top:814px"></div>
<div class="dot" style="left:290px;top:816px;width:9px;height:9px"></div>
<div class="a td" style="left:530px;top:812px">可播送</div>
<div class="a td" style="left:680px;top:812px">增強型每次點選成本</div>
<div class="a td" style="left:831px;top:812px">0.30</div>
<div class="a td" style="left:880px;top:812px">-</div>
<div class="a td" style="left:1030px;top:812px">8/10</div>
<svg class="a" style="left:1153px;top:816px" width="14" height="4" viewBox="0 0 14 4"><g fill="#777"><circle cx="2" cy="2" r="1.5"/><circle cx="7" cy="2" r="1.5"/><circle cx="12" cy="2" r="1.5"/></g></svg>
<div class="a td" style="left:1180px;top:812px">搜尋</div>
<div class="a td" style="left:1280px;top:812px">1153387881167087</div>
<div class="a td" style="left:1400px;top:812px">2017/7/19</div>
<div class="a td" style="left:1500px;top:812px">無</div>
<svg class="a" style="left:0;top:0" width="1900" height="996"><path fill="#dfe8ec" d="M328 560h8v8h-8zM392 560h8v8h-8zM336 568h8v8h-8zM392 568h8v8h-8zM344 584h8v8h-8zM352 584h8v8h-8zM360 584h8v8h-8zM384 584h8v8h-8zM392 584h8v8h-8zM328 592h8v8h-8zM416 592h8v8h-8zM368 600h8v8h-8zM376 616h8v8h-8zM392 616h8v8h-8zM432 616h8v8h-8zM336 624h8v8h-8zM352 624h8v8h-8zM360 624h8v8h-8zM368 624h8v8h-8zM376 624h8v8h-8zM400 624h8v8h-8zM408 624h8v8h-8zM424 624h8v8h-8zM344 640h8v8h-8zM384 640h8v8h-8zM328 648h8v8h-8zM376 648h8v8h-8zM400 648h8v8h-8zM368 656h8v8h-8zM384 656h8v8h-8zM328 680h8v8h-8zM352 696h8v8h-8zM360 696h8v8h-8zM440 696h8v8h-8zM448 696h8v8h-8zM456 696h8v8h-8zM432 704h8v8h-8zM416 712h8v8h-8zM328 728h8v8h-8zM384 728h8v8h-8zM400 728h8v8h-8zM336 736h8v8h-8zM384 736h8v8h-8zM400 736h8v8h-8zM336 752h8v8h-8zM344 752h8v8h-8zM352 752h8v8h-8zM360 752h8v8h-8zM368 752h8v8h-8zM376 752h8v8h-8zM384 752h8v8h-8zM440 752h8v8h-8zM448 752h8v8h-8zM456 752h8v8h-8zM408 760h8v8h-8zM464 760h8v8h-8zM336 768h8v8h-8zM392 768h8v8h-8zM336 784h8v8h-8zM376 784h8v8h-8zM416 784h8v8h-8zM432 784h8v8h-8zM336 792h8v8h-8zM344 792h8v8h-8zM352 792h8v8h-8zM360 792h8v8h-8zM368 792h8v8h-8zM376 792h8v8h-8zM424 792h8v8h-8zM432 792h8v8h-8zM344 808h8v8h-8zM352 808h8v8h-8zM360 808h8v8h-8zM384 808h8v8h-8zM416 808h8v8h-8zM328 816h8v8h-8zM376 816h8v8h-8zM368 824h8v8h-8zM384 824h8v8h-8z"/><path fill="#c7d8df" d="M336 560h8v8h-8zM384 560h8v8h-8zM360 568h8v8h-8zM384 568h8v8h-8zM336 592h8v8h-8zM384 592h8v8h-8zM336 616h8v8h-8zM344 616h8v8h-8zM352 616h8v8h-8zM360 616h8v8h-8zM408 616h8v8h-8zM424 616h8v8h-8zM344 624h8v8h-8zM392 624h8v8h-8zM336 648h8v8h-8zM328 672h8v8h-8zM336 680h8v8h-8zM344 680h8v8h-8zM352 680h8v8h-8zM360 680h8v8h-8zM368 680h8v8h-8zM336 704h8v8h-8zM352 704h8v8h-8zM360 704h8v8h-8zM376 704h8v8h-8zM408 704h8v8h-8zM424 704h8v8h-8zM336 728h8v8h-8zM352 736h8v8h-8zM360 736h8v8h-8zM368 736h8v8h-8zM392 736h8v8h-8zM328 760h8v8h-8zM416 760h8v8h-8zM424 760h8v8h-8zM432 760h8v8h-8zM344 784h8v8h-8zM352 784h8v8h-8zM360 784h8v8h-8zM392 784h8v8h-8zM408 784h8v8h-8zM424 784h8v8h-8zM392 792h8v8h-8zM400 792h8v8h-8zM408 792h8v8h-8zM416 792h8v8h-8zM336 816h8v8h-8zM400 816h8v8h-8zM424 816h8v8h-8z"/><path fill="#97b7c3" d="M344 560h8v8h-8zM352 560h8v8h-8zM352 592h8v8h-8zM360 592h8v8h-8zM368 592h8v8h-8zM392 592h8v8h-8zM352 648h8v8h-8zM360 648h8v8h-8zM368 648h8v8h-8zM384 648h8v8h-8zM368 704h8v8h-8zM416 704h8v8h-8zM440 704h8v8h-8zM448 704h8v8h-8zM456 704h8v8h-8zM344 728h8v8h-8zM352 760h8v8h-8zM360 760h8v8h-8zM368 760h8v8h-8zM376 760h8v8h-8zM384 760h8v8h-8zM392 760h8v8h-8zM440 760h8v8h-8zM456 760h8v8h-8zM352 816h8v8h-8zM360 816h8v8h-8zM368 816h8v8h-8z"/><path fill="#b0c9d2" d="M360 560h8v8h-8zM368 560h8v8h-8zM344 568h8v8h-8zM352 568h8v8h-8zM368 568h8v8h-8zM400 592h8v8h-8zM408 592h8v8h-8zM368 616h8v8h-8zM400 616h8v8h-8zM416 616h8v8h-8zM416 624h8v8h-8zM336 672h8v8h-8zM344 672h8v8h-8zM352 672h8v8h-8zM360 672h8v8h-8zM368 672h8v8h-8zM344 704h8v8h-8zM392 704h8v8h-8zM400 704h8v8h-8zM352 728h8v8h-8zM360 728h8v8h-8zM368 728h8v8h-8zM392 728h8v8h-8zM344 736h8v8h-8zM336 760h8v8h-8zM448 760h8v8h-8zM368 784h8v8h-8zM400 784h8v8h-8zM392 816h8v8h-8zM408 816h8v8h-8zM416 816h8v8h-8z"/><path fill="#eff3f5" d="M376 560h8v8h-8zM400 560h8v8h-8zM328 568h8v8h-8zM376 568h8v8h-8zM400 568h8v8h-8zM328 584h8v8h-8zM336 584h8v8h-8zM368 584h8v8h-8zM400 584h8v8h-8zM408 584h8v8h-8zM416 584h8v8h-8zM328 600h8v8h-8zM336 600h8v8h-8zM344 600h8v8h-8zM352 600h8v8h-8zM360 600h8v8h-8zM384 600h8v8h-8zM392 600h8v8h-8zM400 600h8v8h-8zM408 600h8v8h-8zM416 600h8v8h-8zM384 616h8v8h-8zM432 624h8v8h-8zM328 640h8v8h-8zM336 640h8v8h-8zM352 640h8v8h-8zM360 640h8v8h-8zM368 640h8v8h-8zM376 640h8v8h-8zM392 640h8v8h-8zM400 640h8v8h-8zM328 656h8v8h-8zM336 656h8v8h-8zM344 656h8v8h-8zM352 656h8v8h-8zM360 656h8v8h-8zM392 656h8v8h-8zM400 656h8v8h-8zM376 672h8v8h-8zM336 696h8v8h-8zM344 696h8v8h-8zM368 696h8v8h-8zM376 696h8v8h-8zM392 696h8v8h-8zM400 696h8v8h-8zM416 696h8v8h-8zM424 696h8v8h-8zM432 696h8v8h-8zM384 704h8v8h-8zM336 712h8v8h-8zM344 712h8v8h-8zM352 712h8v8h-8zM376 712h8v8h-8zM392 712h8v8h-8zM400 712h8v8h-8zM408 712h8v8h-8zM424 712h8v8h-8zM440 712h8v8h-8zM448 712h8v8h-8zM456 712h8v8h-8zM328 736h8v8h-8zM376 736h8v8h-8zM328 752h8v8h-8zM392 752h8v8h-8zM408 752h8v8h-8zM416 752h8v8h-8zM424 752h8v8h-8zM432 752h8v8h-8zM464 752h8v8h-8zM400 760h8v8h-8zM328 768h8v8h-8zM344 768h8v8h-8zM360 768h8v8h-8zM368 768h8v8h-8zM376 768h8v8h-8zM384 768h8v8h-8zM408 768h8v8h-8zM440 768h8v8h-8zM448 768h8v8h-8zM456 768h8v8h-8zM464 768h8v8h-8zM384 784h8v8h-8zM384 792h8v8h-8zM328 808h8v8h-8zM336 808h8v8h-8zM368 808h8v8h-8zM376 808h8v8h-8zM392 808h8v8h-8zM400 808h8v8h-8zM408 808h8v8h-8zM424 808h8v8h-8zM328 824h8v8h-8zM336 824h8v8h-8zM344 824h8v8h-8zM352 824h8v8h-8zM360 824h8v8h-8zM376 824h8v8h-8zM392 824h8v8h-8zM400 824h8v8h-8zM408 824h8v8h-8zM416 824h8v8h-8zM424 824h8v8h-8z"/><path fill="#f9f9f9" d="M328 576h8v8h-8zM336 576h8v8h-8zM344 576h8v8h-8zM352 576h8v8h-8zM360 576h8v8h-8zM368 576h8v8h-8zM376 576h8v8h-8zM384 576h8v8h-8zM392 576h8v8h-8zM400 576h8v8h-8zM408 576h8v8h-8zM416 576h8v8h-8zM424 576h8v8h-8zM432 576h8v8h-8zM440 576h8v8h-8zM448 576h8v8h-8zM456 576h8v8h-8zM464 576h8v8h-8zM472 576h8v8h-8zM480 576h8v8h-8zM488 576h8v8h-8zM328 608h8v8h-8zM336 608h8v8h-8zM344 608h8v8h-8zM352 608h8v8h-8zM360 608h8v8h-8zM368 608h8v8h-8zM376 608h8v8h-8zM384 608h8v8h-8zM392 608h8v8h-8zM400 608h8v8h-8zM408 608h8v8h-8zM416 608h8v8h-8zM424 608h8v8h-8zM432 608h8v8h-8zM440 608h8v8h-8zM448 608h8v8h-8zM456 608h8v8h-8zM464 608h8v8h-8zM472 608h8v8h-8zM480 608h8v8h-8zM488 608h8v8h-8zM328 632h8v8h-8zM336 632h8v8h-8zM344 632h8v8h-8zM352 632h8v8h-8zM360 632h8v8h-8zM368 632h8v8h-8zM376 632h8v8h-8zM384 632h8v8h-8zM392 632h8v8h-8zM400 632h8v8h-8zM408 632h8v8h-8zM416 632h8v8h-8zM424 632h8v8h-8zM432 632h8v8h-8zM440 632h8v8h-8zM448 632h8v8h-8zM456 632h8v8h-8zM464 632h8v8h-8zM472 632h8v8h-8zM480 632h8v8h-8zM488 632h8v8h-8zM328 664h8v8h-8zM336 664h8v8h-8zM344 664h8v8h-8zM352 664h8v8h-8zM360 664h8v8h-8zM368 664h8v8h-8zM376 664h8v8h-8zM384 664h8v8h-8zM392 664h8v8h-8zM400 664h8v8h-8zM408 664h8v8h-8zM416 664h8v8h-8zM424 664h8v8h-8zM432 664h8v8h-8zM440 664h8v8h-8zM448 664h8v8h-8zM456 664h8v8h-8zM464 664h8v8h-8zM472 664h8v8h-8zM480 664h8v8h-8zM488 664h8v8h-8zM328 688h8v8h-8zM336 688h8v8h-8zM344 688h8v8h-8zM352 688h8v8h-8zM360 688h8v8h-8zM368 688h8v8h-8zM376 688h8v8h-8zM384 688h8v8h-8zM392 688h8v8h-8zM400 688h8v8h-8zM408 688h8v8h-8zM416 688h8v8h-8zM424 688h8v8h-8zM432 688h8v8h-8zM440 688h8v8h-8zM448 688h8v8h-8zM456 688h8v8h-8zM464 688h8v8h-8zM472 688h8v8h-8zM480 688h8v8h-8zM488 688h8v8h-8zM328 720h8v8h-8zM336 720h8v8h-8zM344 720h8v8h-8zM352 720h8v8h-8zM360 720h8v8h-8zM368 720h8v8h-8zM376 720h8v8h-8zM384 720h8v8h-8zM392 720h8v8h-8zM400 720h8v8h-8zM408 720h8v8h-8zM416 720h8v8h-8zM424 720h8v8h-8zM432 720h8v8h-8zM440 720h8v8h-8zM448 720h8v8h-8zM456 720h8v8h-8zM464 720h8v8h-8zM472 720h8v8h-8zM480 720h8v8h-8zM488 720h8v8h-8zM328 744h8v8h-8zM336 744h8v8h-8zM344 744h8v8h-8zM352 744h8v8h-8zM360 744h8v8h-8zM368 744h8v8h-8zM376 744h8v8h-8zM384 744h8v8h-8zM392 744h8v8h-8zM400 744h8v8h-8zM408 744h8v8h-8zM416 744h8v8h-8zM424 744h8v8h-8zM432 744h8v8h-8zM440 744h8v8h-8zM448 744h8v8h-8zM456 744h8v8h-8zM464 744h8v8h-8zM472 744h8v8h-8zM480 744h8v8h-8zM488 744h8v8h-8zM328 776h8v8h-8zM336 776h8v8h-8zM344 776h8v8h-8zM352 776h8v8h-8zM360 776h8v8h-8zM368 776h8v8h-8zM376 776h8v8h-8zM384 776h8v8h-8zM392 776h8v8h-8zM400 776h8v8h-8zM408 776h8v8h-8zM416 776h8v8h-8zM424 776h8v8h-8zM432 776h8v8h-8zM440 776h8v8h-8zM448 776h8v8h-8zM456 776h8v8h-8zM464 776h8v8h-8zM472 776h8v8h-8zM480 776h8v8h-8zM488 776h8v8h-8zM328 800h8v8h-8zM336 800h8v8h-8zM344 800h8v8h-8zM352 800h8v8h-8zM360 800h8v8h-8zM368 800h8v8h-8zM376 800h8v8h-8zM384 800h8v8h-8zM392 800h8v8h-8zM400 800h8v8h-8zM408 800h8v8h-8zM416 800h8v8h-8zM424 800h8v8h-8zM432 800h8v8h-8zM440 800h8v8h-8zM448 800h8v8h-8zM456 800h8v8h-8zM464 800h8v8h-8zM472 800h8v8h-8zM480 800h8v8h-8zM488 800h8v8h-8z"/><path fill="#7ea5b6" d="M344 592h8v8h-8zM344 648h8v8h-8zM392 648h8v8h-8zM344 760h8v8h-8zM344 816h8v8h-8zM384 816h8v8h-8z"/></svg>
<div class="row" style="top:863px"></div>
<div class="a td b" style="left:330px;top:840px;color:#333">搜尋廣告總計</div>
<div class="q" style="left:409px;top:842px;background:#666">?</div>
<div class="a td" style="left:1030px;top:842px;color:#777">-</div>
<div class="row" style="top:892px"></div>
<div class="a td b" style="left:330px;top:869px;color:#333">客群廣告總計</div>
<div class="q" style="left:409px;top:871px;background:#666">?</div>
<div class="a td" style="left:1030px;top:871px;color:#777">-</div>
<div class="row" style="top:921px"></div>
<div class="a td b" style="left:330px;top:898px;color:#333">刪除的項目總計</div>
<div class="q" style="left:421px;top:900px;background:#666">?</div>
<div class="a td" style="left:1030px;top:900px;color:#777">-</div>
<div class="row" style="top:950px"></div>
<div class="a td b" style="left:330px;top:927px;color:#333">整體總計 - 10 個廣告群組</div>
<div class="a td" style="left:1030px;top:929px;color:#777">-</div>
<div class="a" style="left:243px;top:961px;line-height:16px;color:#333">顯示資料列:</div>
<div class="a" style="left:312px;top:959px;width:45px;height:20px;background:#fff;border:1px solid #b5b5b5;border-radius:2px"></div>
<div class="a" style="left:318px;top:961px;line-height:16px;color:#333">20</div>
<div class="a" style="left:342px;top:962px;line-height:14px;font-size:9px;color:#222">▼</div>
<div class="a" style="left:240px;top:988px;line-height:16px;color:#555">並非所有度量都是即時的。過去 1 小時的點選數與曝光數、過去 2 小時的 UET 成交數，以及過去 5 小時的非 UET 成交數 (應用程式安裝、離線成交) 可能未包含在內。<span class="lnk">了解更多</span></div>
<div class="a" style="left:1482px;top:166px;width:266px;height:46px;background:#ffff00"></div>
<div class="a" id="ann" style="left:1516px;top:176px;font-family:'Liberation Serif','Noto Serif CJK TC','Noto Serif CJK SC',serif;font-weight:bold;font-style:italic;font-size:19px;line-height:26px;color:#e8140c">1. 點選帳戶中的小齒輪</div>
<svg class="a" style="left:1590px;top:20px" width="240" height="150" viewBox="0 0 1594 996">
<defs>
<linearGradient id="g1" gradientUnits="userSpaceOnUse" x1="520" y1="780" x2="1100" y2="330"><stop offset="0" stop-color="#f2780f"/><stop offset="0.5" stop-color="#e9421a"/><stop offset="1" stop-color="#dc2020"/></linearGradient>
<linearGradient id="g2" gradientUnits="userSpaceOnUse" x1="540" y1="830" x2="1100" y2="400"><stop offset="0" stop-color="#fdf00a"/><stop offset="0.35" stop-color="#fbdc0c"/><stop offset="0.7" stop-color="#f59a12"/><stop offset="1" stop-color="#e8401c"/></linearGradient>
<linearGradient id="g3" gradientUnits="userSpaceOnUse" x1="900" y1="300" x2="1330" y2="200"><stop offset="0" stop-color="#e02020"/><stop offset="1" stop-color="#bd1f26"/></linearGradient>
<linearGradient id="g4" gradientUnits="userSpaceOnUse" x1="1300" y1="200" x2="1250" y2="460"><stop offset="0" stop-color="#c8202a"/><stop offset="0.35" stop-color="#f05a1a"/><stop offset="1" stop-color="#fdf00a"/></linearGradient>
<linearGradient id="g5" gradientUnits="userSpaceOnUse" x1="1240" y1="470" x2="1090" y2="560"><stop offset="0" stop-color="#e8381c"/><stop offset="1" stop-color="#fdf00a"/></linearGradient>
<linearGradient id="g6" gradientUnits="userSpaceOnUse" x1="150" y1="900" x2="400" y2="650"><stop offset="0" stop-color="#f08a10"/><stop offset="0.4" stop-color="#ea4a1c"/><stop offset="1" stop-color="#e22a1e"/></linearGradient>
<linearGradient id="g7" gradientUnits="userSpaceOnUse" x1="100" y1="880" x2="400" y2="580"><stop offset="0" stop-color="#f2b00e"/><stop offset="1" stop-color="#f08a12"/></linearGradient>
<linearGradient id="g8" gradientUnits="userSpaceOnUse" x1="520" y1="790" x2="1100" y2="380"><stop offset="0" stop-color="#f2820f"/><stop offset="0.6" stop-color="#ee6a14"/><stop offset="1" stop-color="#e6381c"/></linearGradient>
</defs>
<polygon points="98,852 390,560 445,605 150,905" fill="url(#g7)"/>
<polygon points="125,893 415,610 402,684 174,918" fill="url(#g6)"/>
<polygon points="390,560 437,590 528,716 600,740 554,835 514,807 384,642 400,600" fill="#f07e14"/>
<polygon points="505,705 1030,285 1110,370 540,800 505,760" fill="url(#g1)"/>
<polygon points="510,752 1104,366 1106,384 516,800" fill="url(#g8)"/>
<polygon points="514,790 1106,378 1100,420 554,835" fill="url(#g2)"/>
<polygon points="820,325 1030,288 850,362" fill="#f7a512"/>
<polygon points="920,235 1295,125 1340,155 1225,440 1075,545 1105,370 1030,288 820,325" fill="url(#g3)"/>
<polygon points="1340,155 1265,470 1220,435 1270,250" fill="url(#g4)"/>
<polygon points="1220,435 1265,470 1115,575 1075,545" fill="url(#g5)"/>
</svg>
</body></html>
